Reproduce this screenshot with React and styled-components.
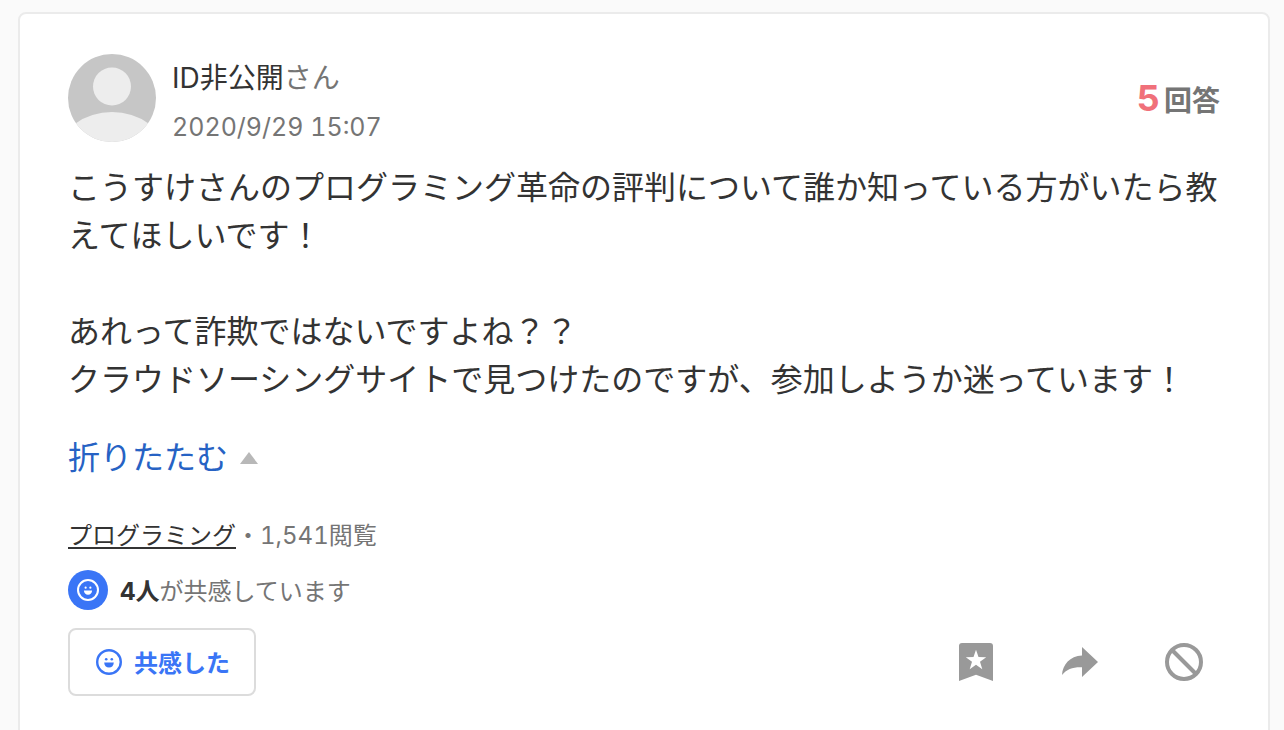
import React from 'react'

import styled, { createGlobalStyle } from 'styled-components'


const question = {
    name: 'ID非公開',
    date: '2020/9/29 15:07',
    answers: 5,
    body: 'こうすけさんのプログラミング革命の評判について誰か知っている方がいたら教えてほしいです！\n\nあれって詐欺ではないですよね？？\nクラウドソーシングサイトで見つけたのですが、参加しようか迷っています！',
    category: 'プログラミング',
    views: '1,541',
    empathy: 4
}

const latin = 'Inter, "Noto Sans CJK JP", sans-serif'
const japanese = '"Noto Sans CJK JP", sans-serif'

const Smile = ({ size }) => (
    <svg width={size} height={size} viewBox="0 0 26 26" aria-hidden="true">
        <circle cx="13" cy="13" r="11.8" fill="none" stroke="currentColor" strokeWidth="2.4" />
        <circle cx="10.2" cy="10.2" r="1.3" fill="currentColor" />
        <circle cx="15.8" cy="10.2" r="1.3" fill="currentColor" />
        <path d="M8.2 13.600h9.600c0 3.100-2 5-4.800 5s-4.800-1.900-4.800-5z" fill="currentColor" />
    </svg>
)

const Avatar = () => (
    <svg width="88" height="88" viewBox="0 0 88 88" aria-hidden="true">
        <defs>
            <clipPath id="avatar">
                <circle cx="44" cy="44" r="44" />
            </clipPath>
        </defs>
        <g clipPath="url(#avatar)">
            <rect width="88" height="88" fill="#c6c6c6" />
            <circle cx="44" cy="32.5" r="19" fill="#ededed" />
            <ellipse cx="44" cy="96" rx="51" ry="38" fill="#ededed" />
        </g>
    </svg>
)

const ClipIcon = () => (
    <svg width="40" height="40" viewBox="0 0 40 40" aria-hidden="true">
        <path
            fillRule="evenodd"
            fill="currentColor"
            d="M6 1h28a3 3 0 0 1 3 3v35l-17-6.200L3 39V4a3 3 0 0 1 3-3zM20 7.800l-2.500 7.300-7.700.1 6.200 4.600-2.300 7.400 6.300-4.500 6.300 4.500-2.300-7.400 6.200-4.600-7.700-.1z"
        />
    </svg>
)

const ShareIcon = () => (
    <svg width="40" height="40" viewBox="0 0 40 40" aria-hidden="true">
        <path fill="currentColor" d="M22 5l16 15-16 15V25.200C13.500 24.800 6.500 27 2 33 2.500 23 10 14 22 13.600z" />
    </svg>
)

const BanIcon = () => (
    <svg width="40" height="40" viewBox="0 0 40 40" fill="none" stroke="currentColor" strokeWidth="4" aria-hidden="true">
        <circle cx="20" cy="20" r="17" />
        <path d="M8 8l24 24" />
    </svg>
)

export default function App() {
    const { name, date, answers, body, category, views, empathy } = question
    return (
        <>
            <GlobalStyle />
            <Card>
                <Header>
                    <Avatar />
                    <User>
                        <Name>{name}<Honorific>さん</Honorific></Name>
                        <Posted>{date}</Posted>
                    </User>
                    <Answers><Count>{answers}</Count>回答</Answers>
                </Header>
                <Body>{body}</Body>
                <Fold type="button">折りたたむ<Triangle /></Fold>
                <Meta>
                    <Category href="#category">{category}</Category>・<Views>{views}</Views>閲覧
                </Meta>
                <Empathy>
                    <Badge><Smile size={22} /></Badge>
                    <p><Strong>{empathy}人</Strong>が共感しています</p>
                </Empathy>
                <Footer>
                    <EmpathyButton type="button"><Smile size={26} />共感した</EmpathyButton>
                    <Actions>
                        <IconButton type="button" aria-label="知恵コレ"><ClipIcon /></IconButton>
                        <IconButton type="button" aria-label="シェア"><ShareIcon /></IconButton>
                        <IconButton type="button" aria-label="違反報告"><BanIcon /></IconButton>
                    </Actions>
                </Footer>
            </Card>
        </>
    )
}

const GlobalStyle = createGlobalStyle`
    * {
        box-sizing: border-box;
    }

    body {
        margin: 0;
        background: #fafafa;
        color: #333;
        font-family: ${latin};
        font-variant-numeric: tabular-nums;
    }

    p {
        margin: 0;
    }

    svg {
        display: block;
        flex-shrink: 0;
    }

    button {
        padding: 0;
        border: 0;
        background: none;
        font-family: inherit;
        cursor: pointer;
    }
`;

const Card = styled.article`
    margin: 12px 14px 12px 18px;
    padding: 40px 48px 48px;
    border: 2px solid #ebebeb;
    border-radius: 8px;
    background: #fff;
`;

const Header = styled.header`
    display: flex;
    align-items: flex-start;
    gap: 16px;
`;

const User = styled.div`
    flex: 1;
`;

const Name = styled.p`
    color: #333;
    font-size: 28px;
    line-height: 48px;
`;

const Honorific = styled.span`
    color: #757575;
`;

const Posted = styled.p`
    color: #757575;
    font-size: 25px;
    line-height: 50px;
`;

const Answers = styled.p`
    display: flex;
    align-items: baseline;
    gap: 4px;
    color: #757575;
    font-size: 28px;
    font-weight: 700;
    line-height: 88px;
`;

const Count = styled.span`
    color: #f0707a;
    font-size: 36px;
`;

const Body = styled.p`
    margin-top: 12px;
    font-size: 32px;
    line-height: 48px;
    white-space: pre-wrap;
    line-break: anywhere;
`;

const Fold = styled.button`
    display: flex;
    align-items: center;
    gap: 12px;
    margin-top: 30px;
    color: #2662c4;
    font-size: 32px;
    line-height: 48px;
`;

const Triangle = styled.span`
    border: solid transparent;
    border-width: 0 9px 12px;
    border-bottom-color: #b8b8b8;
`;

const Meta = styled.p`
    margin-top: 34px;
    color: #757575;
    font-family: ${japanese};
    font-size: 24px;
    line-height: 36px;
`;

const Category = styled.a`
    color: #333;
    text-decoration: underline 2px;
    text-underline-offset: 3px;
    text-decoration-skip-ink: none;
`;

const Views = styled.span`
    font-family: ${latin};
    line-height: 28px;
`;

const Empathy = styled.div`
    display: flex;
    align-items: center;
    gap: 12px;
    margin-top: 18px;
    color: #757575;
    font-family: ${japanese};
    font-size: 24px;
    line-height: 36px;
`;

const Strong = styled.strong`
    color: #333;
    font-family: ${latin};
    line-height: 28px;
`;

const Badge = styled.span`
    display: flex;
    align-items: center;
    justify-content: center;
    width: 40px;
    height: 40px;
    border-radius: 50%;
    background: #3a75f6;
    color: #fff;
`;

const Footer = styled.footer`
    display: flex;
    align-items: center;
    justify-content: space-between;
    margin-top: 18px;
`;

const EmpathyButton = styled.button`
    && {
        display: flex;
        align-items: center;
        gap: 12px;
        padding: 14px 24px 14px 26px;
        border: 2px solid #dcdcdc;
        border-radius: 8px;
        color: #3a75f6;
        font-family: ${japanese};
        font-size: 24px;
        font-weight: 700;
        line-height: 36px;
    }
`;

const Actions = styled.div`
    display: flex;
    gap: 64px;
    padding-right: 16px;
`;

const IconButton = styled.button`
    color: #999;
`;
